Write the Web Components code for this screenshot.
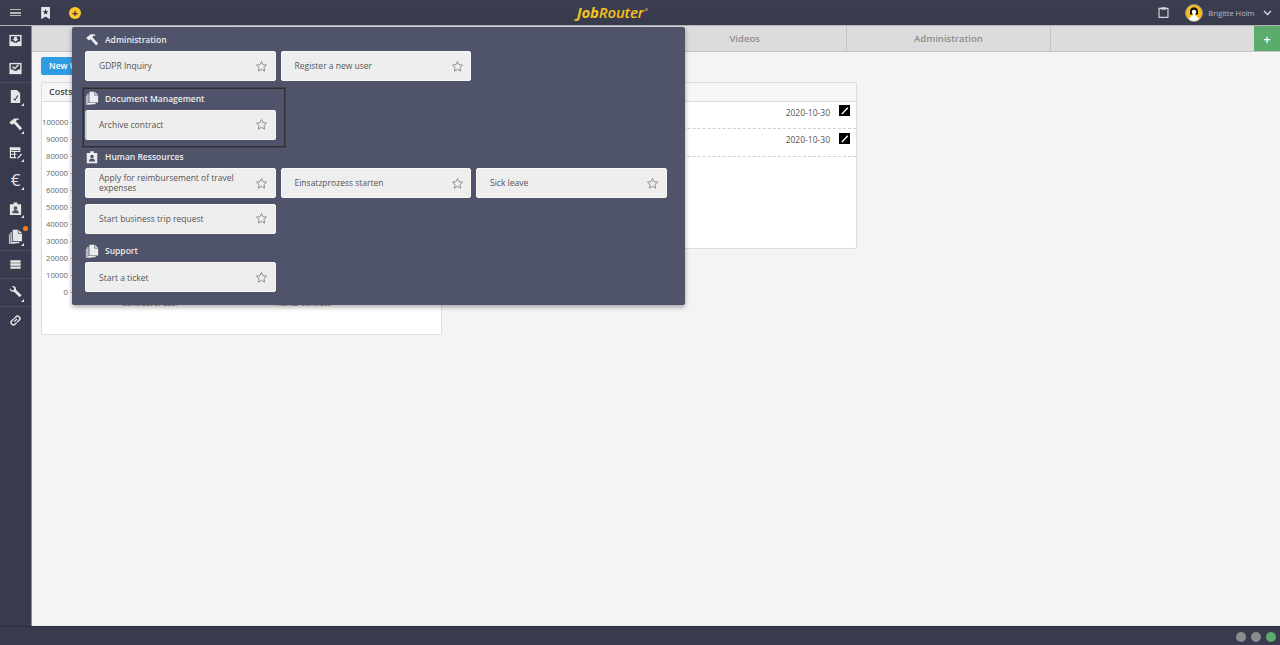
<!DOCTYPE html>
<html>
<head>
<meta charset="utf-8">
<title>JobRouter</title>
<style>
html, body { margin: 0; height: 100%; overflow: hidden; }
body { font-family: "Open Sans", "Noto Sans", sans-serif; font-size: 9px; background: #f4f4f4; color: #555; }
</style>
</head>
<body>
<jr-app>
	<jr-topbar slot="top"></jr-topbar>
	<jr-sidebar slot="side"></jr-sidebar>
	<jr-tabs slot="tabs"></jr-tabs>
	<jr-dashboard slot="main"></jr-dashboard>
	<jr-statusbar slot="bottom"></jr-statusbar>
	<jr-menu slot="menu">
		<jr-section title="Administration" icon="hammer">
			<jr-card>GDPR Inquiry</jr-card>
			<jr-card>Register a new user</jr-card>
		</jr-section>
		<jr-section title="Document Management" icon="docs" focused>
			<jr-card pressed>Archive contract</jr-card>
		</jr-section>
		<jr-section title="Human Ressources" icon="badge">
			<jr-card>Apply for reimbursement of travel expenses</jr-card>
			<jr-card>Einsatzprozess starten</jr-card>
			<jr-card>Sick leave</jr-card>
			<jr-card>Start business trip request</jr-card>
		</jr-section>
		<jr-section title="Support" icon="docs">
			<jr-card>Start a ticket</jr-card>
		</jr-section>
	</jr-menu>
</jr-app>
<script>
(function() {
	const ICONS = {
		hammer: `<path d="M1.500 5.500 6.500 1.500h4.500l1 1.500H9.500L8.500 4.800l6.500 7.200-2.200 2.200-6.500-7.200-1.600 1.300L3 7.500z" fill="currentColor"/>`,
		docs: `<path d="M5 .8h6.200L15 4.600V13H5z" fill="currentColor"/><path d="M11 .8v4h4" fill="none" stroke="#50546a" stroke-width=".8"/><path d="M3.300 3.500v11h8.700" fill="none" stroke="currentColor" stroke-width="1.300"/><path d="M1.500 5.500v10.300H8" fill="none" stroke="currentColor" stroke-width=".9"/>`,
		badge: `<path d="M2 3.500h4V1.500h4v2h4V15H2z" fill="currentColor"/><circle cx="8" cy="7.500" r="2" fill="#50546a"/><path d="M4.500 13c0-2.500 1.500-3.300 3.500-3.300s3.500.8 3.500 3.300z" fill="#50546a"/>`,
		inbox: `<path d="M1.500 2h13v12h-13z" fill="currentColor"/><path d="M3 3.500h10V9h-2.500l-1 1.500h-3L5.500 9H3z" fill="#383b4d"/><path d="M6.500 4h3v2.500h1.700L8 9.300 4.800 6.500h1.700z" fill="currentColor"/>`,
		check: `<path d="M1.500 2h13v12h-13z" fill="currentColor"/><path d="M3 3.500h10V9h-2.500l-1 1.500h-3L5.500 9H3z" fill="#383b4d"/><path d="M4.800 5.800 7.200 8l4-4" fill="none" stroke="currentColor" stroke-width="1.500"/>`,
		docedit: `<path d="M3 1h6.500L13 4.500V15H3z" fill="currentColor"/><path d="m6 10.500 1.500 1.200L10.500 7" fill="none" stroke="#383b4d" stroke-width="1.200"/>`,
		table: `<path d="M2 2.500h11v3H2zM2 6.500h11v1H2z" fill="currentColor"/><path d="M2.600 3v10.500h6M12.500 3v4M7 6v7.500M3 9.800h6" fill="none" stroke="currentColor" stroke-width="1.200"/><path d="m10 13.500 4-4.500 1 1-4 4.500-1.500.3z" fill="currentColor"/>`,
		list: `<path d="M2.500 3.500h11v2.500h-11zM2.500 6.700h11v2.600h-11zM2.500 10h11v2.500h-11z" fill="currentColor"/>`,
		wrench: `<path d="M2 3.500 4.300 5.800 6 5.200l.500-1.700L4.200 1.200C6.500.3 9 2.200 8.500 5l6 5.800-2.200 2.300-6-6C3.800 7.700 1.200 5.800 2 3.500z" fill="currentColor"/>`,
		link: `<path d="M6.800 9.200 9.500 6.500M6.500 6 8.600 3.900a2.200 2.200 0 0 1 3.100 0l.4.400a2.200 2.200 0 0 1 0 3.100L10 9.500M9.500 10 7.400 12.100a2.200 2.200 0 0 1-3.100 0l-.4-.4a2.200 2.200 0 0 1 0-3.100L6 6.500" fill="none" stroke="currentColor" stroke-width="1.500"/>`,
		bookmark: `<path d="M2.500 1h10v14L7.500 12l-5 3z" fill="currentColor"/><path d="m7.500 3.500 1 2.200 2.300.2-1.800 1.500.6 2.300-2.100-1.200-2.100 1.200.6-2.300-1.800-1.500 2.300-.2z" fill="#383b4d"/>`,
		clipboard: `<path d="M5.500 3H2.500v11h11V3h-3" fill="none" stroke="currentColor" stroke-width="1.400"/><path d="M5 1.500h6V4.500H5z" fill="currentColor"/>`,
		star: `<path d="m8 1.800 1.900 4 4.300.5-3.200 3 .9 4.400L8 11.500l-3.900 2.200.9-4.400-3.200-3 4.300-.5z" fill="none" stroke="currentColor" stroke-width="1.100" stroke-linejoin="round"/>`
	};

	function svgIcon(name, size) {
		return `<svg width="${size}" height="${size}" viewBox="0 0 16 16" aria-hidden="true">${ICONS[name]}</svg>`;
	}

	class JrApp extends HTMLElement {
		constructor() {
			super();
			this.attachShadow({mode: "open"}).innerHTML = `
				<style>
				:host { display: grid; grid-template-columns: 32px 1fr; grid-template-rows: 26px 1fr 19px; height: 645px; position: relative; background: #f4f4f4; }
				.top { grid-column: 1 / 3; }
				.bottom { grid-column: 1 / 3; }
				.side { display: block; }
				.content { display: flex; flex-direction: column; min-width: 0; }
				</style>
				<div class="top"><slot name="top"></slot></div>
				<div class="side"><slot name="side"></slot></div>
				<div class="content"><slot name="tabs"></slot><slot name="main"></slot></div>
				<div class="bottom"><slot name="bottom"></slot></div>
				<slot name="menu"></slot>
			`;
		}
	}

	class JrTopbar extends HTMLElement {
		constructor() {
			super();
			this.attachShadow({mode: "open"}).innerHTML = `
				<style>
				:host { display: flex; align-items: center; height: 25px; border-bottom: 1px solid #b4b4b6; background: linear-gradient(#3b3e50, #383b4c); color: #e6e6e6; position: relative; }
				.burger { width: 11px; height: 5px; margin-left: 10px; border-top: 1.500px solid #b8b8bc; border-bottom: 1.500px solid #b8b8bc; position: relative; }
				.burger::after { content: ""; position: absolute; left: 0; right: 0; top: 2px; height: 1.500px; background: #b8b8bc; }
				.mark { margin-left: 18px; display: flex; }
				.add { margin-left: 16px; width: 12px; height: 12px; border-radius: 50%; background: #fdc82b; color: #383b4d; font: 700 11px/12px "Open Sans", sans-serif; text-align: center; }
				.logo { flex: 1; text-align: center; padding-right: 14px; color: #f4c11f; font: italic 700 15px/25px "Open Sans", sans-serif; letter-spacing: -0.2px; }
				.logo span { font-weight: 600; }
				.logo i { display: inline-block; width: 3px; height: 3px; margin: 0 0 7px 1px; border-radius: 50%; background: #8f8756; }
				.clip { display: flex; color: #d8d8d8; margin-right: 14.500px; }
				.avatar { width: 18px; height: 18px; border-radius: 50%; background: #f6bf1f; border: 1px solid #8a8a90; box-sizing: border-box; margin-right: 5.500px; display: flex; overflow: hidden; }
				.user { font-size: 7.500px; color: #bdbdc3; margin-right: 8px; }
				.chev { margin-right: 8.500px; display: flex; }
				</style>
				<div class="burger"></div>
				<div class="mark">${svgIcon("bookmark", 14)}</div>
				<div class="add">+</div>
				<div class="logo">Job<span>Router</span><i></i></div>
				<div class="clip">${svgIcon("clipboard", 13)}</div>
				<div class="avatar"><svg width="16" height="16" viewBox="0 0 15 15"><path d="M3.500 9c.5-1 .2-3 .5-4.500C4.400 2.800 6 2 7.500 2s3.100.8 3.500 2.500c.3 1.500 0 3.500.5 4.500z" fill="#111"/><path d="M2.500 15c0-3.500 2.800-4.500 3.800-5V8.500h2.400V10c1 .5 3.800 1.500 3.800 5z" fill="#fff"/><circle cx="7.500" cy="6.500" r="2.100" fill="#fff"/></svg></div>
				<div class="user">Brigitte Holm</div>
				<div class="chev"><svg width="9" height="6" viewBox="0 0 9 6"><path d="m1 1 3.500 3.500L8 1" fill="none" stroke="#ddd" stroke-width="1.300"/></svg></div>
			`;
		}
	}

	class JrSidebar extends HTMLElement {
		constructor() {
			super();
			const groups = [["inbox", "check"], ["docedit", "hammer", "table", "euro", "badge", "docs"], ["list"], ["wrench"], ["link"]];
			const cornered = new Set(["docedit", "hammer", "table", "euro", "badge", "docs", "wrench"]);
			const html = groups.map(g => `<div class="group">` + g.map(n =>
				`<div class="item ${cornered.has(n) ? "corner" : ""} ${n === "docs" ? "dot" : ""}">${n === "euro" ? `<span class="euro">€</span>` : svgIcon(n, 15)}</div>`
			).join("") + `</div>`).join("");
			this.attachShadow({mode: "open"}).innerHTML = `
				<style>
				:host { display: block; height: 100%; width: 31px; border-right: 1px solid #8b8b90; background: #383b4d; color: #e6e6e6; box-sizing: content-box; }
				.group { border-bottom: 1px solid #4a4d5e; margin-bottom: -1px; }
				.group:last-child { border-bottom: 0; }
				.item { height: 28px; display: flex; align-items: center; justify-content: center; position: relative; }
				.euro { font-size: 17px; line-height: 20px; }
				.corner::after { content: ""; position: absolute; left: 21px; top: 21px; border-left: 3px solid transparent; border-bottom: 3px solid #e6e6e6; }
				.dot::before { content: ""; position: absolute; left: 23px; top: 4px; width: 5px; height: 5px; border-radius: 50%; background: #f5820f; }
				</style>
				${html}
			`;
		}
	}

	class JrTabs extends HTMLElement {
		constructor() {
			super();
			this.attachShadow({mode: "open"}).innerHTML = `
				<style>
				:host { display: flex; height: 26px; box-sizing: border-box; background: #dcdcdc; border-bottom: 1px solid #c4c4c4; font-size: 9.500px; font-weight: 600; color: #8d8d8d; }
				.tab { width: 203.750px; border-right: 1px solid #c4c4c4; display: flex; align-items: center; justify-content: center; box-sizing: border-box; }
				.fill { flex: 1; }
				.plus { width: 26px; background: #5aab6c; color: #fff; display: flex; align-items: center; justify-content: center; font-size: 13px; font-weight: 600; }
				</style>
				<div class="tab"></div><div class="tab"></div><div class="tab"></div>
				<div class="tab">Videos</div>
				<div class="tab">Administration</div>
				<div class="fill"></div>
				<div class="plus">+</div>
			`;
		}
	}

	class JrDashboard extends HTMLElement {
		constructor() {
			super();
			const labels = [100000, 90000, 80000, 70000, 60000, 50000, 40000, 30000, 20000, 10000, 0];
			const pen = `<div class="pen"><svg width="11" height="11" viewBox="0 0 10 10"><path d="M2 8 7.500 2 8.500 3 3 8.700z" fill="#fff"/></svg></div>`;
			this.attachShadow({mode: "open"}).innerHTML = `
				<style>
				:host { display: block; flex: 1; padding: 5px 0 0 9px; }
				.new { height: 18px; width: 120px; box-sizing: border-box; padding: 0 8px; line-height: 18px; border-radius: 2px; background: #2f9be2; color: #fff; font-size: 8.500px; font-weight: 600; white-space: nowrap; overflow: hidden; }
				.cards { display: flex; gap: 14.500px; margin-top: 7px; align-items: flex-start; }
				.panel { background: #fff; border: 1px solid #dedede; border-radius: 2px; box-sizing: border-box; width: 400.500px; }
				.head { height: 18.500px; background: #f6f6f6; border-bottom: 1px solid #dedede; padding: 0 7px; line-height: 17px; font-weight: 600; color: #444; font-size: 9px; box-sizing: border-box; }
				.chart { height: 232px; box-sizing: border-box; padding-top: 12px; display: flex; }
				.axis { width: 30px; flex: none; text-align: right; font-size: 7.700px; color: #666; line-height: 17px; }
				.axis div { background: linear-gradient(#ccc, #ccc) right center / 2px 1px no-repeat; padding-right: 4px; }
				.xaxis { display: flex; margin: 183.500px 0 0 1.500px; height: 12px; font-size: 7.500px; line-height: 12px; color: #666; }
				.xaxis div { width: 153.500px; text-align: center; }
				.right { height: 166.500px; }
				.row { height: 27.500px; border-bottom: 1px dashed #d0d0d0; display: flex; justify-content: flex-end; gap: 9px; padding: 0 5.500px 0 0; box-sizing: border-box; font-size: 8.500px; color: #555; line-height: 21px; }
				.pen { width: 11px; height: 11px; margin-top: 3.500px; background: #000; display: flex; }
				</style>
				<div class="new">New Widget</div>
				<div class="cards">
					<div class="panel">
						<div class="head">Costs</div>
						<div class="chart">
							<div class="axis">${labels.map(l => `<div>${l}</div>`).join("")}</div>
							<div class="xaxis"><div>Contract of user</div><div>Rental contract</div></div>
						</div>
					</div>
					<div class="panel right">
						<div class="head"></div>
						<div class="row">2020-10-30${pen}</div>
						<div class="row">2020-10-30${pen}</div>
					</div>
				</div>
			`;
		}
	}

	class JrStatusbar extends HTMLElement {
		constructor() {
			super();
			this.attachShadow({mode: "open"}).innerHTML = `
				<style>
				:host { display: flex; align-items: center; justify-content: flex-end; gap: 5px; height: 19px; box-sizing: border-box; padding: 1px 4px 0 0; background: #383b4d; border-top: 1px solid #2c2e3c; }
				b { width: 10px; height: 10px; border-radius: 50%; background: #8c8c8c; }
				b.on { background: #5aab6c; }
				</style>
				<b></b><b></b><b class="on"></b>
			`;
		}
	}

	class JrMenu extends HTMLElement {
		constructor() {
			super();
			this.attachShadow({mode: "open"}).innerHTML = `
				<style>
				:host { display: block; position: absolute; left: 72px; top: 27px; width: 613px; height: 278px; box-sizing: border-box; padding: 0 0 7px 13px; background: #50546a; border-radius: 2px; box-shadow: 0 2px 5px rgba(0,0,0,.35); }
				</style>
				<slot></slot>
			`;
		}
	}

	class JrSection extends HTMLElement {
		constructor() {
			super();
			this.attachShadow({mode: "open"}).innerHTML = `
				<style>
				:host { display: block; position: relative; }
				:host([focused])::after { content: ""; position: absolute; left: -2px; top: 2.700px; width: 200px; height: 57px; border: 1px solid #2e2e33; outline: 1px solid rgba(40,40,46,.4); pointer-events: none; }
				.title { height: 24px; box-sizing: border-box; padding-top: 1px; display: flex; align-items: center; gap: 6px; color: #ecedf0; font-size: 8.500px; font-weight: 600; }
				.icon { display: flex; width: 14px; justify-content: center; }
				.cards { display: flex; flex-wrap: wrap; column-gap: 5px; row-gap: 5.500px; padding-bottom: 4.600px; }
				</style>
				<div class="title"><span class="icon" id="icon"></span><span id="text"></span></div>
				<div class="cards"><slot></slot></div>
			`;
		}
		connectedCallback() {
			this.shadowRoot.getElementById("text").textContent = this.getAttribute("title");
			this.shadowRoot.getElementById("icon").innerHTML = svgIcon(this.getAttribute("icon"), 14);
		}
	}

	class JrCard extends HTMLElement {
		constructor() {
			super();
			this.attachShadow({mode: "open"}).innerHTML = `
				<style>
				:host { display: flex; align-items: center; width: 190.500px; height: 30px; box-sizing: border-box; padding: .600px 6.500px 0 13px; background: #eeeeee; border: 1px solid #f8f8f8; border-radius: 2px; color: #555; font-size: 8.500px; line-height: 10px; }
				:host([pressed]) { border-left: 2px solid #d0d0d0; padding-left: 12px; }
				.label { flex: 1; padding-right: 20px; }
				.star { display: flex; color: #858585; }
				</style>
				<span class="label"><slot></slot></span>
				<span class="star">${svgIcon("star", 13)}</span>
			`;
		}
	}

	customElements.define("jr-app", JrApp);
	customElements.define("jr-topbar", JrTopbar);
	customElements.define("jr-sidebar", JrSidebar);
	customElements.define("jr-tabs", JrTabs);
	customElements.define("jr-dashboard", JrDashboard);
	customElements.define("jr-statusbar", JrStatusbar);
	customElements.define("jr-menu", JrMenu);
	customElements.define("jr-section", JrSection);
	customElements.define("jr-card", JrCard);
})();
</script>
</body>
</html>
